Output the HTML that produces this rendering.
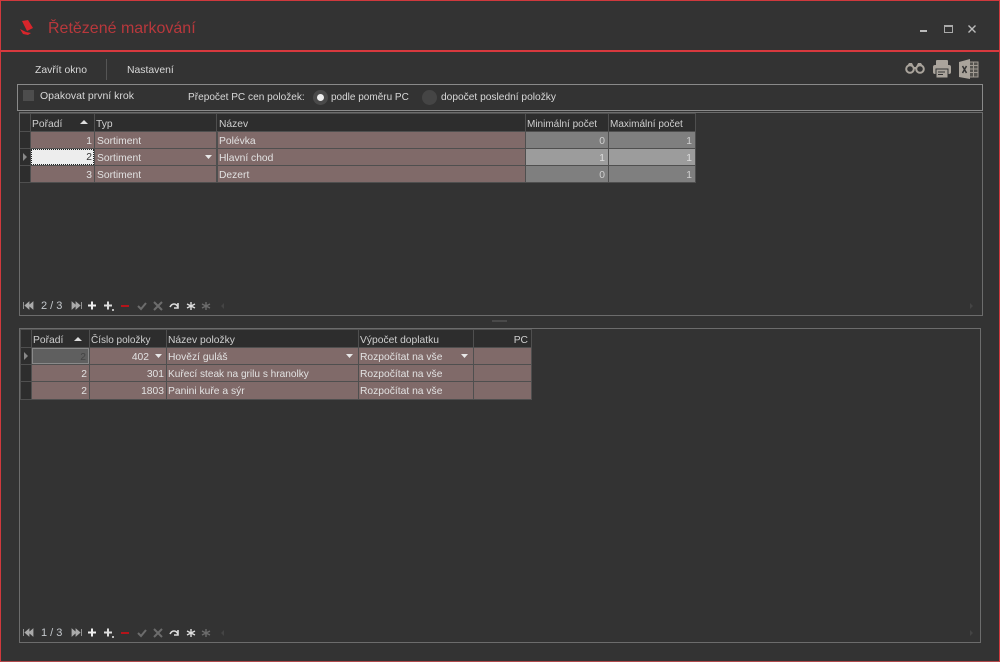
<!DOCTYPE html>
<html><head><meta charset="utf-8">
<style>
html,body{margin:0;padding:0;background:#333;}
#w{position:relative;width:1000px;height:662px;background:#333;overflow:hidden;font:10.3px/17px "Liberation Sans",sans-serif;color:#d8d8d8;}
#w div,#w svg{position:absolute;}
.t{white-space:nowrap;}
.r{text-align:right;}
.h{background:#2d2d2d;color:#cfcfcf;line-height:21px;}
.c{background:#806a69;color:#e2e2e2;white-space:nowrap;box-sizing:border-box;padding-left:1px;line-height:19px;}
.c.r{padding:0 2px 0 0;}
.g{background:#7f7f7f;color:#d0d0d0;white-space:nowrap;box-sizing:border-box;text-align:right;padding-right:3px;line-height:19px;}
.b{border:1px solid #6c6c6c;box-sizing:border-box;}
.n{font-size:10px;}
</style></head><body><div id="w">
<div style="left:0;top:0;width:1000px;height:662px;box-sizing:border-box;border:1px solid #d0393d;border-bottom-color:#b04a4c"></div>
<div style="left:1px;top:50px;width:998px;height:2px;background:#d8393e"></div>

<svg style="left:18px;top:20px" width="18" height="18" viewBox="0 0 18 18"><path d="M4 1L10 0L15 8L9 11Z" fill="#d9252b"/><path d="M2 9L8 12L13 13L10 15L5 14Z" fill="#d9252b"/></svg>
<div class="t" style="left:48px;top:18px;font-size:16px;line-height:22px;color:#b8383c">Řetězené markování</div>

<div style="left:920px;top:30px;width:7px;height:2px;background:#bbb"></div>
<div style="left:944px;top:25px;width:9px;height:8px;box-sizing:border-box;border:1px solid #aaa;border-top-width:2px"></div>
<svg style="left:967px;top:24px" width="10" height="10" viewBox="0 0 10 10"><path d="M1.500 1.500L8.500 8.500M8.500 1.500L1.500 8.500" stroke="#bbb" stroke-width="1.400"/></svg>

<div class="t" style="left:35px;top:62px;font-size:10.4px">Zavřít okno</div>
<div style="left:106px;top:59px;width:1px;height:21px;background:#555"></div>
<div class="t" style="left:127px;top:62px;font-size:10.4px">Nastavení</div>

<svg style="left:904px;top:61px" width="22" height="14" viewBox="0 0 22 14"><circle cx="6" cy="8" r="3.800" fill="none" stroke="#aaa49c" stroke-width="2"/><circle cx="16" cy="8" r="3.800" fill="none" stroke="#aaa49c" stroke-width="2"/><path d="M3 5L5 2H8L9.500 5ZM12.500 5L14 2H17L19 5Z" fill="#aaa49c"/><rect x="9" y="6" width="4" height="2" fill="#aaa49c"/></svg>
<svg style="left:932px;top:59px" width="20" height="20" viewBox="0 0 20 20"><rect x="4" y="1" width="12" height="6" rx="1" fill="#aaa49c"/><rect x="1" y="6" width="18" height="9" rx="2" fill="#aaa49c"/><rect x="4" y="10" width="12" height="9" fill="#aaa49c" stroke="#333" stroke-width="1"/><path d="M6 13H13M6 15.500H11" stroke="#333"/></svg>
<svg style="left:958px;top:59px" width="21" height="21" viewBox="0 0 21 21"><rect x="11" y="3" width="9" height="15" fill="#55534f" stroke="#a09a92"/><path d="M11 6.500H20M11 10H20M11 13.500H20M15.500 3V18" stroke="#a09a92"/><path d="M1 3L12 0V20L1 18Z" fill="#aaa49c"/><path d="M4.500 7L8.500 14M8.500 7L4.500 14" stroke="#333" stroke-width="1.500"/></svg>

<div style="left:17px;top:84px;width:966px;height:27px;box-sizing:border-box;border:1px solid #8a8a8a"></div>
<div style="left:23px;top:90px;width:11px;height:11px;background:#4d4d4d"></div>
<div class="t" style="left:40px;top:87px;font-size:10.5px;line-height:19px">Opakovat první krok</div>
<div class="t n" style="left:188px;top:89px;line-height:18px;font-size:10.1px">Přepočet PC cen položek:</div>
<div style="left:313px;top:90px;width:15px;height:15px;border-radius:50%;background:#4a4a4a"></div>
<div style="left:317px;top:94px;width:7px;height:7px;border-radius:50%;background:#eee"></div>
<div class="t n" style="left:331px;top:89px;line-height:18px">podle poměru PC</div>
<div style="left:422px;top:90px;width:15px;height:15px;border-radius:50%;background:#454545"></div>
<div class="t n" style="left:441px;top:89px;line-height:18px;font-size:10.2px">dopočet poslední položky</div>

<!-- top grid -->
<div class="b" style="left:19px;top:112px;width:964px;height:204px"></div>
<div style="left:20px;top:113px;width:676px;height:70px;background:#4f4f4f"></div>
<div class="h" style="left:20px;top:114px;width:10px;height:17px"></div>
<div class="h t" style="left:31px;top:114px;width:63px;height:17px;padding-left:1px;box-sizing:border-box">Pořadí</div>
<svg style="left:79px;top:119px" width="10" height="6"><path d="M1 5L5 1L9 5Z" fill="#ddd"/></svg>
<div class="h t" style="left:95px;top:114px;width:121px;height:17px;padding-left:1px;box-sizing:border-box">Typ</div>
<div class="h t" style="left:217px;top:114px;width:308px;height:17px;padding-left:2px;box-sizing:border-box">Název</div>
<div class="h t n" style="left:526px;top:114px;width:82px;height:17px;padding-left:1px;box-sizing:border-box">Minimální počet</div>
<div class="h t n" style="left:609px;top:114px;width:86px;height:17px;padding-left:1px;box-sizing:border-box">Maximální počet</div>

<div class="h" style="left:20px;top:132px;width:10px;height:16px"></div>
<div class="h" style="left:20px;top:149px;width:10px;height:16px"></div>
<div class="h" style="left:20px;top:166px;width:10px;height:16px"></div>
<svg style="left:23px;top:153px" width="4" height="8"><path d="M0 0L4 4L0 8Z" fill="#888"/></svg>

<div class="c r" style="left:31px;top:132px;width:63px;height:16px">1</div>
<div class="c" style="left:95px;top:132px;width:121px;height:16px;padding-left:2px">Sortiment</div>
<div class="c" style="left:218px;top:132px;width:307px;height:16px">Polévka</div>
<div class="g" style="left:526px;top:132px;width:82px;height:16px">0</div>
<div class="g" style="left:609px;top:132px;width:86px;height:16px">1</div>

<div class="c r" style="left:31px;top:149px;width:63px;height:16px;line-height:18px;background:#ededed;color:#333;outline:1px dotted #222;outline-offset:-1px">2</div>
<div class="c" style="left:95px;top:149px;width:121px;height:16px;padding-left:2px">Sortiment</div>
<svg style="left:204px;top:155px" width="9" height="5"><path d="M1 0H8L4.500 4Z" fill="#e8e8e8"/></svg>
<div class="c" style="left:218px;top:149px;width:307px;height:16px">Hlavní chod</div>
<div class="g" style="left:526px;top:149px;width:82px;height:16px;background:#9c9c9c;color:#ddd">1</div>
<div class="g" style="left:609px;top:149px;width:86px;height:16px;background:#9c9c9c;color:#ddd">1</div>

<div class="c r" style="left:31px;top:166px;width:63px;height:16px">3</div>
<div class="c" style="left:95px;top:166px;width:121px;height:16px;padding-left:2px">Sortiment</div>
<div class="c" style="left:218px;top:166px;width:307px;height:16px">Dezert</div>
<div class="g" style="left:526px;top:166px;width:82px;height:16px">0</div>
<div class="g" style="left:609px;top:166px;width:86px;height:16px">1</div>

<svg style="left:22px;top:299px" width="200" height="14" viewBox="0 0 200 14">
<path d="M1.500 3V10M7 3L3 6.500L7 10ZM11 3L7 6.500L11 10Z" stroke="#aaa" fill="#aaa" stroke-width=".8"/>
<path d="M50 3L54 6.500L50 10ZM54 3L58 6.500L54 10ZM59.500 3V10" stroke="#aaa" fill="#aaa" stroke-width=".8"/>
<path d="M70 2.500V10.500M66 6.500H74" stroke="#eee" stroke-width="2"/>
<path d="M86 2.500V10.500M82 6.500H90" stroke="#ddd" stroke-width="2"/><rect x="90" y="10" width="2" height="2" fill="#bbb"/>
<path d="M99 7H107" stroke="#b5141a" stroke-width="2"/>
<path d="M116 7L119 10L124 4" stroke="#6c6c6c" stroke-width="2" fill="none"/>
<path d="M132 3L140 11M140 3L132 11" stroke="#6c6c6c" stroke-width="2"/>
<path d="M148 8C150 4 154 4 156 8M156 4V9H152" stroke="#ddd" stroke-width="1.600" fill="none"/>
<path d="M169 3V11M165 5L173 9M173 5L165 9" stroke="#ddd" stroke-width="1.400"/>
<path d="M184 3V11M180 5L188 9M188 5L180 9" stroke="#6c6c6c" stroke-width="1.400"/>
</svg>
<div class="t" style="left:41px;top:298px;font-size:11px;color:#c4c8cc">2 / 3</div>
<svg style="left:221px;top:303px" width="4" height="6"><path d="M3 0L0 3L3 6Z" fill="#444"/></svg>
<svg style="left:970px;top:303px" width="4" height="6"><path d="M0 0L3 3L0 6Z" fill="#444"/></svg>

<div style="left:492px;top:320px;width:15px;height:2px;background:#4a4a4a"></div>

<!-- bottom grid -->
<div class="b" style="left:19px;top:328px;width:962px;height:315px"></div>
<div style="left:20px;top:329px;width:512px;height:71px;background:#4f4f4f"></div>
<div class="h" style="left:21px;top:330px;width:10px;height:17px"></div>
<div class="h t" style="left:32px;top:330px;width:57px;height:17px;box-sizing:border-box;padding-left:1px">Pořadí</div>
<svg style="left:73px;top:336px" width="10" height="6"><path d="M1 5L5 1L9 5Z" fill="#ddd"/></svg>
<div class="h t n" style="left:90px;top:330px;width:76px;height:17px;padding-left:1px;box-sizing:border-box">Číslo položky</div>
<div class="h t" style="left:167px;top:330px;width:191px;height:17px;padding-left:1px;box-sizing:border-box">Název položky</div>
<div class="h t" style="left:359px;top:330px;width:114px;height:17px;padding-left:1px;box-sizing:border-box">Výpočet doplatku</div>
<div class="h t r" style="left:474px;top:330px;width:57px;height:17px;padding-right:3px;box-sizing:border-box">PC</div>

<div class="h" style="left:21px;top:348px;width:10px;height:16px"></div>
<div class="h" style="left:21px;top:365px;width:10px;height:16px"></div>
<div class="h" style="left:21px;top:382px;width:10px;height:17px"></div>
<svg style="left:24px;top:352px" width="4" height="8"><path d="M0 0L4 4L0 8Z" fill="#888"/></svg>

<div class="c r" style="left:32px;top:348px;width:57px;height:16px;line-height:17px;background:#5f5f5f;color:#444;border:1px solid #8a8a8a">2</div>
<div class="c r" style="left:90px;top:348px;width:76px;height:16px;padding-right:17px">402</div>
<svg style="left:154px;top:354px" width="9" height="5"><path d="M1 0H8L4.500 4Z" fill="#e8e8e8"/></svg>
<div class="c" style="left:167px;top:348px;width:191px;height:16px">Hovězí guláš</div>
<svg style="left:345px;top:354px" width="9" height="5"><path d="M1 0H8L4.500 4Z" fill="#e8e8e8"/></svg>
<div class="c" style="left:359px;top:348px;width:114px;height:16px">Rozpočítat na vše</div>
<svg style="left:460px;top:354px" width="9" height="5"><path d="M1 0H8L4.500 4Z" fill="#e8e8e8"/></svg>
<div class="c" style="left:474px;top:348px;width:57px;height:16px"></div>

<div class="c r" style="left:32px;top:365px;width:57px;height:16px">2</div>
<div class="c r" style="left:90px;top:365px;width:76px;height:16px">301</div>
<div class="c" style="left:167px;top:365px;width:191px;height:16px;font-size:10.1px">Kuřecí steak na grilu s hranolky</div>
<div class="c" style="left:359px;top:365px;width:114px;height:16px">Rozpočítat na vše</div>
<div class="c" style="left:474px;top:365px;width:57px;height:16px"></div>

<div class="c r" style="left:32px;top:382px;width:57px;height:17px">2</div>
<div class="c r" style="left:90px;top:382px;width:76px;height:17px">1803</div>
<div class="c" style="left:167px;top:382px;width:191px;height:17px">Panini kuře a sýr</div>
<div class="c" style="left:359px;top:382px;width:114px;height:17px">Rozpočítat na vše</div>
<div class="c" style="left:474px;top:382px;width:57px;height:17px"></div>

<svg style="left:22px;top:626px" width="200" height="14" viewBox="0 0 200 14">
<path d="M1.500 3V10M7 3L3 6.500L7 10ZM11 3L7 6.500L11 10Z" stroke="#aaa" fill="#aaa" stroke-width=".8"/>
<path d="M50 3L54 6.500L50 10ZM54 3L58 6.500L54 10ZM59.500 3V10" stroke="#aaa" fill="#aaa" stroke-width=".8"/>
<path d="M70 2.500V10.500M66 6.500H74" stroke="#eee" stroke-width="2"/>
<path d="M86 2.500V10.500M82 6.500H90" stroke="#ddd" stroke-width="2"/><rect x="90" y="10" width="2" height="2" fill="#bbb"/>
<path d="M99 7H107" stroke="#b5141a" stroke-width="2"/>
<path d="M116 7L119 10L124 4" stroke="#6c6c6c" stroke-width="2" fill="none"/>
<path d="M132 3L140 11M140 3L132 11" stroke="#6c6c6c" stroke-width="2"/>
<path d="M148 8C150 4 154 4 156 8M156 4V9H152" stroke="#ddd" stroke-width="1.600" fill="none"/>
<path d="M169 3V11M165 5L173 9M173 5L165 9" stroke="#ddd" stroke-width="1.400"/>
<path d="M184 3V11M180 5L188 9M188 5L180 9" stroke="#6c6c6c" stroke-width="1.400"/>
</svg>
<div class="t" style="left:41px;top:625px;font-size:11px;color:#c4c8cc">1 / 3</div>
<svg style="left:221px;top:630px" width="4" height="6"><path d="M3 0L0 3L3 6Z" fill="#444"/></svg>
<svg style="left:970px;top:630px" width="4" height="6"><path d="M0 0L3 3L0 6Z" fill="#444"/></svg>
</div></body></html>
